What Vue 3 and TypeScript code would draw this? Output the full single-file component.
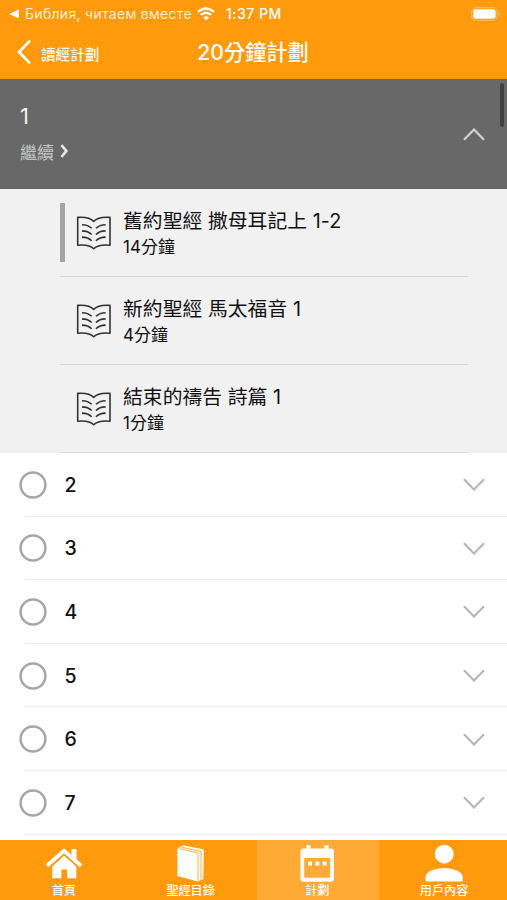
<script setup lang="ts">
interface Reading {
  title: string
  duration: string
  active: boolean
}

interface Tab {
  id: 'home' | 'bible' | 'plan' | 'user'
  label: string
}

const readings: Reading[] = [
  { title: '舊約聖經 撒母耳記上 1-2', duration: '14分鐘', active: true },
  { title: '新約聖經 馬太福音 1', duration: '4分鐘', active: false },
  { title: '結束的禱告 詩篇 1', duration: '1分鐘', active: false },
]

const days: number[] = [2, 3, 4, 5, 6, 7]

const tabs: Tab[] = [
  { id: 'home', label: '首頁' },
  { id: 'bible', label: '聖經目錄' },
  { id: 'plan', label: '計劃' },
  { id: 'user', label: '用戶內容' },
]

const activeTab: Tab['id'] = 'plan'
</script>

<template>
  <div class="screen">
    <header class="header">
      <div class="status">
        <svg class="back-app" viewBox="0 0 10 10"><path d="M0 5 10 .6v8.8z" fill="#fff" /></svg>
        <span class="app-name">Библия, читаем вместе</span>
        <svg class="wifi" viewBox="0 0 18 14">
          <path d="M1 5Q9-2 17 5M3.8 8Q9 3.4 14.2 8" fill="none" stroke="#fff" stroke-width="2.3" />
          <path d="M6.1 10.4Q9 8 11.9 10.4L9 13.5z" fill="#fff" />
        </svg>
        <span class="time">1:37 PM</span>
        <svg class="battery" viewBox="0 0 30 14">
          <rect x=".7" y=".7" width="25.6" height="12.6" rx="4" fill="none" stroke="#ffb750" stroke-width="1.2" />
          <rect x="2.2" y="2.3" width="22.4" height="9.4" rx="2.3" fill="#fff" />
          <path d="M27.5 4.8q2.3 2.2 0 4.4z" fill="#ffc36e" />
        </svg>
      </div>
      <nav class="nav">
        <div class="back">
          <svg viewBox="0 0 14 24"><path d="M12.3 1.5 2 12l10.3 10.5" fill="none" stroke="#fff" stroke-width="2.7" stroke-linecap="round" /></svg>
          <span>讀經計劃</span>
        </div>
        <h1>20分鐘計劃</h1>
      </nav>
    </header>

    <main class="content">
      <section class="current">
        <div>
          <div class="current-day">1</div>
          <div class="resume">
            <span>繼續</span>
            <svg viewBox="0 0 9 14"><path d="M1.5 1.2 6.3 7l-4.8 5.8" fill="none" stroke="#e4e4e4" stroke-width="2.7" /></svg>
          </div>
        </div>
        <svg class="chevron" viewBox="0 0 22 13"><path d="M1 11.7 11 1.5l10 10.2" fill="none" stroke="#d2d2d2" stroke-width="2.2" /></svg>
        <i class="scrollbar"></i>
      </section>

      <ul class="readings">
        <li v-for="item in readings" :key="item.title" class="reading">
          <i class="marker" :class="{ on: item.active }"></i>
          <svg class="book" viewBox="0 0 36 36">
            <g fill="none" stroke="#333" stroke-width="1.6" stroke-linejoin="round">
              <path d="M17.700 6.500Q13 1.500 1.700 2.400v27.800Q13 29 17.700 33.800Q22.400 29 34 30.200V2.400Q22.400 1.500 17.700 6.500z" />
              <path d="M6 9.700q6 0 9.700 3.600M6 15.900q6 0 9.700 3.600M6 22.100q6 0 9.700 3.600M29.600 9.700q-6 0-9.700 3.600M29.600 15.900q-6 0-9.700 3.600M29.600 22.100q-6 0-9.700 3.600" />
            </g>
          </svg>
          <div class="reading-text">
            <div class="reading-title">{{ item.title }}</div>
            <div class="duration">{{ item.duration }}</div>
          </div>
        </li>
      </ul>

      <ul class="days">
        <li v-for="day in days" :key="day" class="day">
          <svg class="circle" viewBox="0 0 28 28"><circle cx="14" cy="14" r="12.4" fill="none" stroke="#a6a6a6" stroke-width="2.5" /></svg>
          <span class="number">{{ day }}</span>
          <svg class="chevron" viewBox="0 0 22 13"><path d="M1 1.3 11 11.5l10-10.2" fill="none" stroke="#b7b7b7" stroke-width="2.2" /></svg>
        </li>
      </ul>
    </main>

    <footer class="tabs">
      <div v-for="tab in tabs" :key="tab.id" class="tab" :class="{ selected: tab.id === activeTab }">
        <svg v-if="tab.id === 'home'" viewBox="0 0 40 40" fill="#fff">
          <path d="M21 11.500 33.300 22.500V34.300H24.300V25.500h-6v8.800H9.300V22.500z" />
          <path d="M4 21.700 21 6.800l17 14.900" fill="none" stroke="#fff" stroke-width="4" />
          <path d="M28.500 5H33.500v12l-5-4.500z" />
          <path d="M6 23.700 21 10.500l15 13.200" fill="none" stroke="#ff9a0d" stroke-width="1.1" />
        </svg>
        <svg v-else-if="tab.id === 'bible'" viewBox="0 0 40 40">
          <path d="M7.300 4.500 13.500 1.200l20.300 4.200-.5 29.500-5.500 2.500L7.300 32z" fill="#fff" />
          <path d="M9 4.500 28 9V37M11.500 3.200 31 7.500V35.800" fill="none" stroke="#ff9a0d" stroke-width=".8" />
        </svg>
        <svg v-else-if="tab.id === 'plan'" viewBox="0 0 40 40">
          <path fill="#fff" fill-rule="evenodd" d="M6.500 4.500H9.500V1h4v3.500h14V1h4v3.500h2.200q3.300 0 3.300 3.300v26.700q0 3.300-3.300 3.300h-27q-3.300 0-3.300-3.300V7.800q0-3.300 3.300-3.300zM7.200 14v18.800q0 1 1 1h24q1 0 1-1V14z" />
          <path fill="#fff" d="M11 17.500h4v4h-4zM18.300 17.500h4v4h-4zM25.600 17.500h4v4h-4z" />
        </svg>
        <svg v-else viewBox="0 0 40 40" fill="#fff">
          <circle cx="20.2" cy="10.200" r="9.4" />
          <path d="M1.500 37.500v-4.500C1.500 27.500 11 24 20 24S38.700 27.500 38.700 33v4.500z" />
        </svg>
        <span>{{ tab.label }}</span>
      </div>
    </footer>
  </div>
</template>

<style>
body {
  margin: 0;
}
</style>

<style scoped>
* {
  box-sizing: border-box;
}

.screen {
  width: 507px;
  height: 900px;
  display: flex;
  flex-direction: column;
  overflow: hidden;
  background: #fff;
  color: #111;
  font-family: Inter, "Noto Sans CJK TC", sans-serif;
}

ul {
  list-style: none;
  margin: 0;
  padding: 0;
}

svg {
  display: block;
  flex: none;
}

.header {
  flex: none;
  height: 80px;
  background: #ff9a0d;
  border-bottom: 1px solid #806235;
  color: #fff;
}

.status {
  height: 27px;
  display: flex;
  align-items: center;
  padding: 0 6px 0 9px;
  white-space: nowrap;
}

.back-app {
  width: 10px;
  height: 10px;
}

.app-name {
  width: 172px;
  margin-left: 6px;
  color: #ffecd1;
  font-size: 14px;
  letter-spacing: 0.3px;
}

.wifi {
  width: 18px;
  height: 14px;
}

.time {
  margin-left: 11px;
  font-size: 14px;
  font-weight: 500;
  letter-spacing: 0.5px;
}

.battery {
  width: 30px;
  height: 14px;
  margin-left: auto;
}

.nav {
  height: 50px;
  display: grid;
  grid-template-columns: 1fr auto 1fr;
  align-items: center;
  padding: 0 18px 0 17px;
}

.back {
  display: flex;
  align-items: center;
  gap: 10px;
  font-size: 14.6px;
  font-weight: 500;
}

.back svg {
  width: 14px;
  height: 24px;
}

.back span {
  padding-top: 2px;
}

h1 {
  margin: 0;
  font-size: 21.2px;
  line-height: 30px;
  font-weight: 500;
}

.content {
  flex: 1;
  min-height: 0;
  overflow: hidden;
}

.current {
  position: relative;
  height: 109px;
  display: flex;
  align-items: center;
  justify-content: space-between;
  padding: 0 22px 0 20px;
  background: #686868;
  color: #f2f2f2;
}

.current-day {
  font-size: 22px;
  line-height: 30px;
}

.resume {
  display: flex;
  align-items: center;
  gap: 6px;
  height: 24px;
  margin: 8px 0 5px;
  color: #c4c4c4;
  font-size: 17px;
}

.resume svg {
  width: 9px;
  height: 14px;
}

.chevron {
  width: 22px;
  height: 13px;
}

.scrollbar {
  position: absolute;
  top: 3px;
  right: 3px;
  width: 4px;
  height: 44px;
  border-radius: 2px;
  background: #404040;
}

.readings {
  height: 264px;
  background: #f1f1f1;
  padding: 0 39px 0 60px;
}

.reading {
  height: 88px;
  display: flex;
  align-items: center;
  border-bottom: 1px solid #d9d9d9;
}

.marker {
  width: 5px;
  height: 59px;
}

.marker.on {
  background: #a4a4a4;
}

.book {
  width: 36px;
  height: 36px;
  margin-left: 11px;
}

.reading-text {
  margin-left: 11px;
  white-space: nowrap;
}

.reading-title {
  font-size: 19.8px;
  line-height: 28px;
  letter-spacing: 0.05px;
}

.duration {
  font-size: 17px;
  line-height: 24px;
}

.day {
  height: 63.6px;
  display: flex;
  align-items: center;
  padding: 0 22px 0 18.5px;
  background: linear-gradient(#ececec, #ececec) 25px 100% / 100% 1px no-repeat;
}

.circle {
  width: 28px;
  height: 28px;
}

.number {
  margin-left: 18px;
  font-size: 19.5px;
  font-weight: 500;
}

.day .chevron {
  margin-left: auto;
}

.tabs {
  flex: none;
  height: 60px;
  display: grid;
  grid-template-columns: repeat(4, 1fr);
  background: #ff9a0d;
  color: #fff;
}

.tab {
  display: flex;
  flex-direction: column;
  align-items: center;
  padding-top: 4px;
}

.tab.selected {
  background: linear-gradient(#ffaa35, #ffaa35) 3px 0 / 122px 100% no-repeat;
}

.tab svg {
  width: 40px;
  height: 40px;
}

.tab span {
  padding-left: 1px;
  font-size: 12.2px;
  line-height: 14px;
  font-weight: 500;
}
</style>
